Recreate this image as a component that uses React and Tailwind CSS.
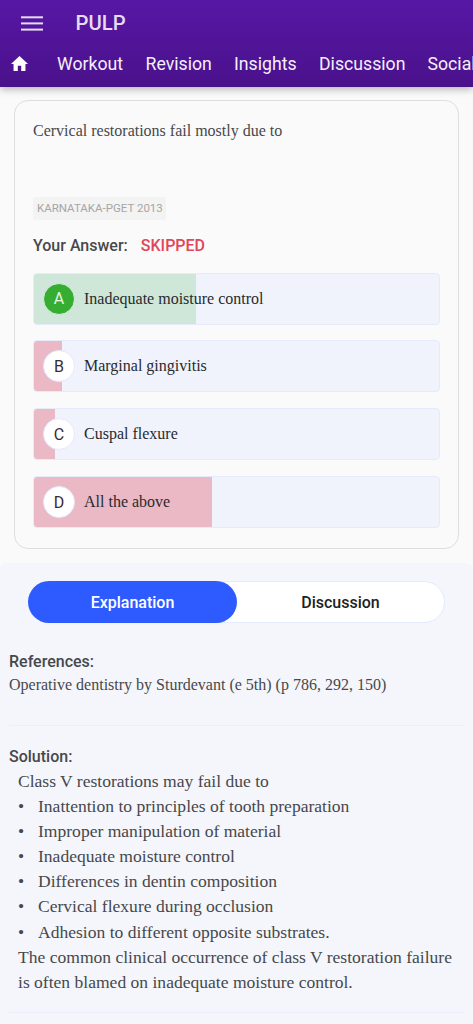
import React from "react";

const navItems = [
  { label: "Workout", className: "w-[88.5px]" },
  { label: "Revision", className: "w-[88.5px]" },
  { label: "Insights", className: "w-[85px]" },
  { label: "Discussion", className: "w-[108.5px]" },
  { label: "Social", className: "w-[60px]" },
];

const options = [
  { letter: "A", text: "Inadequate moisture control", percent: 40, correct: true },
  { letter: "B", text: "Marginal gingivitis", percent: 7 },
  { letter: "C", text: "Cuspal flexure", percent: 5.1 },
  { letter: "D", text: "All the above", percent: 44 },
];

const causes = [
  "Inattention to principles of tooth preparation",
  "Improper manipulation of material",
  "Inadequate moisture control",
  "Differences in dentin composition",
  "Cervical flexure during occlusion",
  "Adhesion to different opposite substrates.",
];

const serif = "font-['Liberation_Serif',serif]";

function Header() {
  return (
    <header className="relative z-10 h-[87px] overflow-visible bg-linear-to-b from-[#5717a5] to-[#4a118b] shadow-[0_2px_8px_rgba(0,0,0,0.3)]">
      <div className="flex h-[46px] items-center pl-[21px]">
        <svg width="22" height="15" viewBox="0 0 22 15" fill="#e6dcf1" aria-hidden="true">
          <rect y="0.3" width="22" height="2" />
          <rect y="6.4" width="22" height="2" />
          <rect y="12.6" width="22" height="2" />
        </svg>
        <h1 className="ml-[32.5px] text-[20.3px] leading-6 font-medium text-[#e6dcf1]">PULP</h1>
      </div>
      <nav className="flex h-[36px] items-center overflow-hidden pl-[11px]">
        <div className="w-[46px] shrink-0">
          <svg className="-mt-px" width="17" height="15" viewBox="2 3 20 17" preserveAspectRatio="none" fill="white" aria-label="Home">
            <path d="M10 20v-6h4v6h5v-8h3L12 3 2 12h3v8z" />
          </svg>
        </div>
        {navItems.map((item) => (
          <a key={item.label} className={`${item.className} shrink-0 text-[17.7px] leading-6 text-[#f4effa]`}>
            {item.label}
          </a>
        ))}
      </nav>
    </header>
  );
}

function Option({ letter, text, percent, correct }) {
  return (
    <li className="relative flex h-[52px] items-center overflow-hidden rounded-[4px] border border-[#e6ebfc] bg-[#f0f3fc] pl-[9px]">
      <div
        className={`absolute inset-y-0 left-0 ${correct ? "bg-[#cfe7d8]" : "bg-[#eab9c5]"}`}
        style={{ width: `${percent}%` }}
      />
      <span
        className={`relative flex size-8 items-center justify-center rounded-full border pt-px text-[16px] ${
          correct ? "border-[#dcebe8] bg-[#35ad30] text-[#e3f5e1]" : "border-[#e6e8fb] bg-white text-[#3b2b30]"
        }`}
      >
        {letter}
      </span>
      <span className={`relative ml-[9px] text-[16px] leading-5 text-[#292a2d] ${serif}`}>{text}</span>
    </li>
  );
}

export default function App() {
  return (
    <div className="flex h-[1024px] flex-col overflow-hidden bg-[#fafafa] font-[Roboto,sans-serif] text-[#47484b]">
      <Header />
      <main className="flex flex-1 flex-col">
        <section className="mx-[14px] mt-[13px] flex h-[449px] shrink-0 flex-col rounded-[14px] border border-[#dedede] px-[18px] pt-[19px]">
          <p className={`h-[77px] text-[16px] leading-[21px] ${serif}`}>Cervical restorations fail mostly due to</p>
          <span className="flex h-[23px] w-[133px] items-center rounded-[2px] bg-[#f3f3f3] pt-px pl-[4px] text-[11.5px] whitespace-nowrap text-[#a5a5a5]">
            KARNATAKA-PGET 2013
          </span>
          <p className="mt-[14px] flex h-6 items-center gap-[13px] text-[16px] font-medium">
            <span>Your Answer:</span>
            <span className="text-[#e14658]">SKIPPED</span>
          </p>
          <ul className="mt-[14.5px] flex flex-col gap-[15.9px]">
            {options.map((option) => (
              <Option key={option.letter} {...option} />
            ))}
          </ul>
        </section>

        <section className="mt-[14px] flex flex-1 flex-col rounded-t-[6px] bg-[#f4f6fc] px-[9px] pt-[18px]">
          <div className="mx-[19px] flex h-[42px] w-[417px] shrink-0 rounded-full border border-[#e5eafd] bg-white text-[16px] font-medium">
            <button className="-my-px -ml-px w-[209px] rounded-full bg-[#2e5bff] pt-px text-white">Explanation</button>
            <button className="flex-1 pt-px text-[#1e1f22]">Discussion</button>
          </div>

          <div className="mt-[27px] h-[76px] border-b border-[#edeff5]">
            <h2 className="text-[16px] leading-6 font-medium">References:</h2>
            <p className={`text-[16px] leading-[22px] ${serif}`}>Operative dentistry by Sturdevant (e 5th) (p 786, 292, 150)</p>
          </div>

          <div className="mt-[19px] h-[268px] border-b border-[#ebeffc]">
            <h2 className="text-[16px] leading-6 font-medium">Solution:</h2>
            <div className={`pl-[9px] text-[17.56px] leading-[25.1px] ${serif}`}>
              <p>Class V restorations may fail due to</p>
              <ul>
                {causes.map((cause) => (
                  <li key={cause} className="flex">
                    <span className="w-[20px]">•</span>
                    <span>{cause}</span>
                  </li>
                ))}
              </ul>
              <p className="whitespace-nowrap">
                The common clinical occurrence of class V restoration failure
                <br />
                is often blamed on inadequate moisture control.
              </p>
            </div>
          </div>
        </section>
      </main>
    </div>
  );
}
